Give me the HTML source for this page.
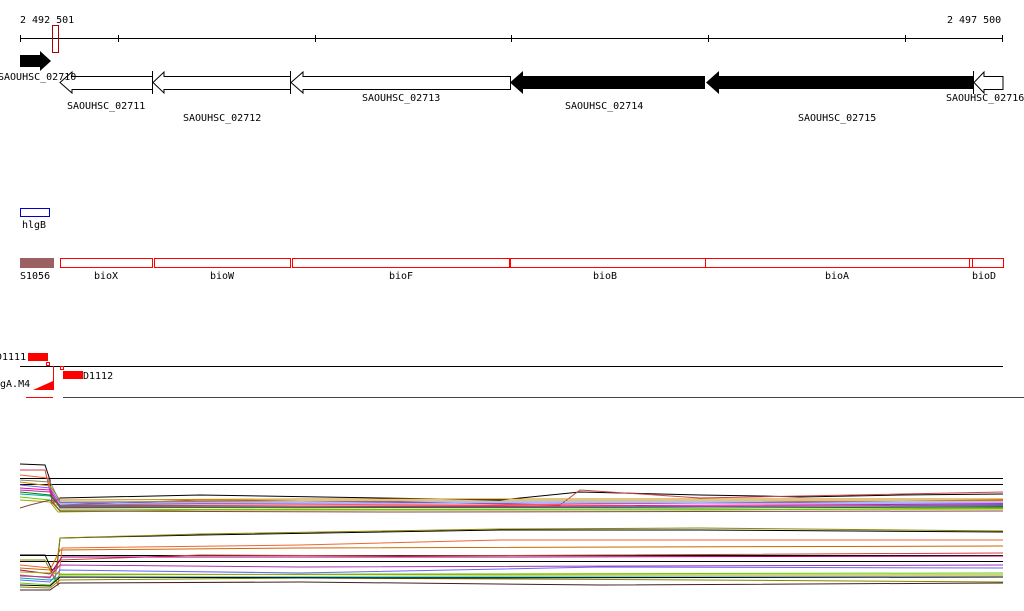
<!DOCTYPE html>
<html><head><meta charset="utf-8"><style>
html,body{margin:0;padding:0;background:#fff;width:1024px;height:611px;overflow:hidden}
svg{display:block}
text{font-family:"DejaVu Sans Mono","Liberation Mono",monospace;font-size:10px;fill:#000}
</style></head><body>
<svg width="1024" height="611" viewBox="0 0 1024 611" xmlns="http://www.w3.org/2000/svg">
<text x="20" y="23">2 492 501</text>
<text x="947" y="23">2 497 500</text>
<line x1="20" y1="38.5" x2="1003" y2="38.5" stroke="#000"/>
<g stroke="#000">
<line x1="20.5" y1="35" x2="20.5" y2="42"/><line x1="118.5" y1="35" x2="118.5" y2="42"/>
<line x1="315.5" y1="35" x2="315.5" y2="42"/><line x1="511.5" y1="35" x2="511.5" y2="42"/>
<line x1="708.5" y1="35" x2="708.5" y2="42"/><line x1="905.5" y1="35" x2="905.5" y2="42"/>
<line x1="1002.5" y1="35" x2="1002.5" y2="42"/></g>
<rect x="52.5" y="25.5" width="6" height="27" fill="none" stroke="#a00"/>
<polygon points="20,55 40,55 40,51 51,61 40,71 40,67 20,67" fill="#000"/>
<g fill="#fff" stroke="#000">
<polygon points="152.5,76.5 72,76.5 72,72 60,82.5 72,93 72,89.5 152.5,89.5"/>
<polygon points="290.5,76.5 164,76.5 164,72 153,82.5 164,93 164,89.5 290.5,89.5"/>
<polygon points="510.5,76.5 303,76.5 303,72 291,82.5 303,93 303,89.5 510.5,89.5"/>
<polygon points="1003,76.5 984,76.5 984,72 974,82.5 984,93 984,89.5 1003,89.5"/>
</g>
<polygon points="705,76 523,76 523,71 510,82.5 523,94 523,89 705,89" fill="#000"/>
<polygon points="973,76 719,76 719,71 706,82.5 719,94 719,89 973,89" fill="#000"/>
<line x1="152.5" y1="71" x2="152.5" y2="94" stroke="#000"/>
<line x1="290.5" y1="71" x2="290.5" y2="94" stroke="#000"/>
<line x1="973.5" y1="71" x2="973.5" y2="94" stroke="#000"/>
<text x="-2" y="80">SAOUHSC_02710</text>
<text x="67" y="109">SAOUHSC_02711</text>
<text x="183" y="121">SAOUHSC_02712</text>
<text x="362" y="101">SAOUHSC_02713</text>
<text x="565" y="109">SAOUHSC_02714</text>
<text x="798" y="121">SAOUHSC_02715</text>
<text x="946" y="101">SAOUHSC_02716</text>
<rect x="20.5" y="208.5" width="29" height="8" fill="none" stroke="#00c"/>
<text x="22" y="228">hlgB</text>
<rect x="20" y="258" width="34" height="10" fill="#9b6060"/>
<g fill="none" stroke="#f00">
<rect x="60.5" y="258.5" width="92" height="9"/><rect x="154.5" y="258.5" width="136" height="9"/>
<rect x="292.5" y="258.5" width="217" height="9"/><rect x="510.5" y="258.5" width="195" height="9"/>
<rect x="705.5" y="258.5" width="264" height="9"/><rect x="969.5" y="258.5" width="3" height="9"/>
<rect x="972.5" y="258.5" width="31" height="9"/></g>
<text x="20" y="279">S1056</text><text x="94" y="279">bioX</text><text x="210" y="279">bioW</text>
<text x="389" y="279">bioF</text><text x="593" y="279">bioB</text><text x="825" y="279">bioA</text><text x="972" y="279">bioD</text>
<text x="-4" y="360">D1111</text>
<rect x="28" y="353" width="20" height="8" fill="#f00"/>
<line x1="20" y1="366.5" x2="1003" y2="366.5" stroke="#000"/>
<rect x="46.5" y="362.5" width="3" height="3" fill="none" stroke="#f00"/>
<rect x="60.5" y="366.5" width="3" height="3" fill="none" stroke="#f00"/>
<rect x="63" y="371" width="20" height="8" fill="#f00"/>
<text x="83" y="379">D1112</text>
<text x="-6" y="387">igA.M4</text>
<polygon points="33,390 53,381 53,390" fill="#f00"/>
<line x1="53.5" y1="366" x2="53.5" y2="390" stroke="#f00"/>
<line x1="26" y1="397.5" x2="53" y2="397.5" stroke="#f00"/>
<line x1="63" y1="397.5" x2="1024" y2="397.5" stroke="#444"/>
<g fill="none" stroke-width="1">
<line x1="20" y1="478.5" x2="1003" y2="478.5" stroke="#000"/>
<line x1="20" y1="484.5" x2="1003" y2="484.5" stroke="#000"/>
<polyline stroke="#000" points="20,464 45,465 50,480 52,503 60,498 200,495 500,500 580,492 700,495 760,496 800,497 900,495 1003,494"/>
<polyline stroke="#c44" points="20,470 45,470 52,500 60,505 200,500 400,502 560,505 580,490 700,498 1003,492"/>
<polyline stroke="#e63" points="20,475 48,478 55,505 200,504 500,505 1003,500"/>
<polyline stroke="#0aa" points="20,494 50,496 60,505 300,506 600,507 1003,505"/>
<polyline stroke="#9a0" points="20,500 50,502 58,512 200,510 500,510 1003,509"/>
<polyline stroke="#a3a" points="20,490 50,492 60,508 400,507 1003,506"/>
<polyline stroke="#6c0" points="20,497 50,500 60,510 300,509 700,510 1003,508"/>
<polyline stroke="#66f" points="20,485 50,488 60,503 400,503 1003,503"/>
<polyline stroke="#c80" points="20,482 50,486 60,500 300,499 1003,499"/>
<polyline stroke="#844" points="20,508 30,505 50,500 60,511 400,512 1003,511"/>
<polyline stroke="#f0a" points="20,488 50,490 60,506 500,506 1003,504"/>
<polyline stroke="#080" points="20,492 50,495 60,507 700,508 1003,507"/>
<polyline stroke="#886" points="20,480 50,482 60,502 300,501 1003,501"/>
<line x1="20" y1="561.5" x2="1003" y2="561.5" stroke="#000"/>
<line x1="20" y1="555.5" x2="1003" y2="555.5" stroke="#000"/>
<polyline stroke="#000" points="20,555 45,555 52,570 57,567 60,538 200,535 500,530 700,530 1003,532"/>
<polyline stroke="#880" points="20,560 45,560 55,580 60,538 200,534 500,529 700,528 1003,531"/>
<polyline stroke="#e63" points="20,565 50,568 58,585 62,548 300,545 500,540 1003,540"/>
<polyline stroke="#c60" points="20,568 50,570 60,550 300,548 1003,546"/>
<polyline stroke="#c44" points="20,575 50,578 60,560 200,555 400,556 1003,553"/>
<polyline stroke="#a06" points="20,570 50,574 62,557 500,557 1003,556"/>
<polyline stroke="#66f" points="20,580 50,582 60,570 300,573 600,567 1003,568"/>
<polyline stroke="#6c0" points="20,583 50,585 60,575 400,574 1003,573"/>
<polyline stroke="#0aa" points="20,578 50,580 60,577 400,577 1003,577"/>
<polyline stroke="#880" points="20,587 50,588 60,580 300,578 700,580 1003,582"/>
<polyline stroke="#000" points="20,585 50,586 60,577 400,578 1003,577"/>
<polyline stroke="#a3a" points="20,576 50,577 60,565 300,567 1003,565"/>
<polyline stroke="#422" points="20,590 50,590 60,583 300,582 600,585 1003,583"/>
<polyline stroke="#9a0" points="20,572 50,573 62,574 500,575 1003,575"/>
</g>
</svg>
</body></html>
